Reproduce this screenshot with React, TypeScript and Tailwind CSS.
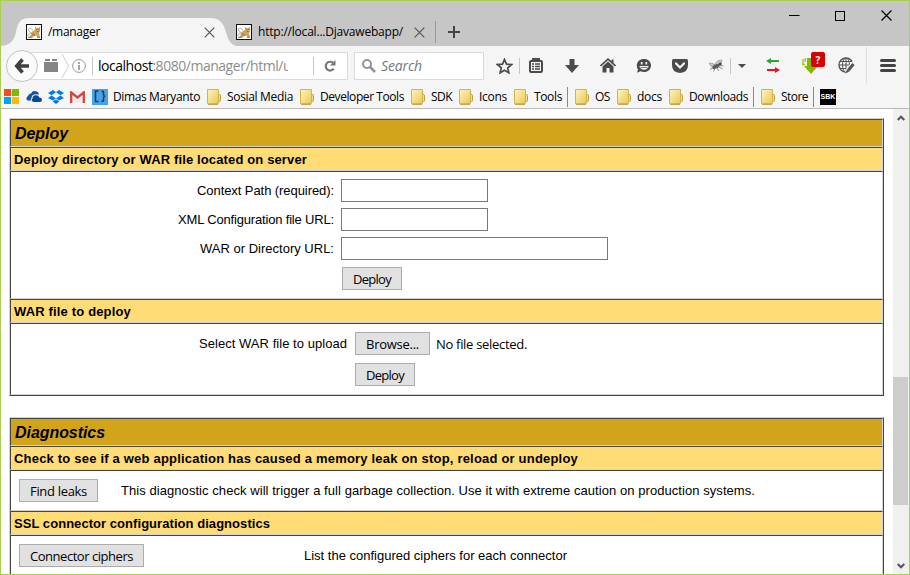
import { useLayoutEffect, useRef, useState, type ReactNode } from "react";

const UI = "font-['Open_Sans','Noto_Sans',sans-serif]";
const ARIAL = "font-['Liberation_Sans',Arial,sans-serif]";

/** Single-line text in a box of `w` pixels, tracked so that its glyphs fill the box. */
function Fit({ w, className = "", children }: { w: number; className?: string; children: ReactNode }) {
  const ref = useRef<HTMLSpanElement>(null);
  const [spacing, setSpacing] = useState(0);
  useLayoutEffect(() => {
    const el = ref.current;
    if (!el) return;
    const n = (el.textContent || "").length;
    setSpacing((w - 1 - el.getBoundingClientRect().width) / n);
  }, [w]);
  return (
    <span className={`inline-block shrink-0 whitespace-nowrap text-left ${className}`} style={{ width: w }}>
      <span ref={ref} style={{ letterSpacing: spacing }}>{children}</span>
    </span>
  );
}

function Tomcat() {
  return (
    <svg width="16" height="16" viewBox="0 0 16 16" className="shrink-0">
      <rect x=".5" y=".5" width="15" height="15" fill="#fff" stroke="#111" />
      <path d="M9 2.500l1.500 1.500h2L14 2.500V7l-1 2 1 4h-2.500L10 11.500 6.500 13H3l1.500-1.500L5 8.500 7 7l2-1z" fill="#cfa458" />
      <path d="M1.800 12c0-2 2-1.500 2.500-3S2.500 6.800 2.500 5.500 4 4 5 4.500s1 1.500 2 1.500" fill="none" stroke="#a9a9a9" />
      <path d="M2 13.300h4.500M11 13.300h3M6 10l3 1.500M10.300 5.500h.9M12.400 5.500h.9M11 7.500h1.500" stroke="#6f5a35" fill="none" strokeWidth=".8" />
    </svg>
  );
}

function Cross() {
  return (
    <svg width="11" height="11" viewBox="0 0 11 11" className="shrink-0">
      <path d="M.7.700l9.600 9.600M10.300.700L.7 10.300" stroke="#555" strokeWidth="1.200" />
    </svg>
  );
}

function Folder({ className = "" }: { className?: string }) {
  return (
    <svg width="14" height="16" viewBox="0 0 14 16" className={`shrink-0 ${className}`}>
      <defs>
        <linearGradient id="fold" x1="0" y1="0" x2="1" y2="1">
          <stop offset="0" stopColor="#fff6b8" />
          <stop offset="1" stopColor="#e6c75c" />
        </linearGradient>
      </defs>
      <path d="M9 5.500h3.500q1 0 1 1v5q0 1-1 1H11v2H9z" fill="#f1dc86" stroke="#c29f37" />
      <path d="M.5.500h11v13l-1 1.500H1.500q-1 0-1-1z" fill="url(#fold)" stroke="#d2b34d" />
      <path d="M1 15.200h10" stroke="#b8922c" />
    </svg>
  );
}

function TabStrip() {
  return (
    <div className="flex h-[45px] shrink-0 bg-[#c6c6c6]">
      <div className="relative mt-[17px] flex h-[28px] w-[235px] shrink-0">
        <svg width="236" height="28" viewBox="0 0 236 28" className="absolute left-0 top-0">
          <path d="M0 28C10 27 13 22 15 14C17 5 19 0 28 0H209C218 0 222 4 225 14C227 22 230 27 236 28Z" fill="#f5f5f5" />
        </svg>
        <div className="relative flex h-7 items-center pl-[25px]">
          <Tomcat />
          <Fit w={53} className="ml-[6px] text-[12px] leading-[16px]">/manager</Fit>
          <div className="ml-[103px]"><Cross /></div>
        </div>
      </div>
      <div className="mt-[17px] flex h-7 items-center">
        <Tomcat />
        <Fit w={146} className="ml-[6px] text-[12px] leading-[16px]">http://local...Djavawebapp/</Fit>
        <div className="ml-[10px]"><Cross /></div>
        <div className="ml-[10px] h-[22px] w-px bg-[#999]" />
        <svg width="12" height="12" viewBox="0 0 12 12" className="ml-3">
          <path d="M6 0v12M0 6h12" stroke="#444" strokeWidth="2" />
        </svg>
      </div>
      <div className="ml-auto flex h-[29px] items-center pr-[17px]">
        <svg width="11" height="11" viewBox="0 0 11 11"><path d="M0 5.500h10.500" stroke="#000" /></svg>
        <svg width="10" height="10" viewBox="0 0 10 10" className="ml-[35px]"><rect x=".5" y=".5" width="9" height="9" fill="none" stroke="#000" /></svg>
        <svg width="11" height="11" viewBox="0 0 11 11" className="ml-[36px]"><path d="M.5.500l10 10M10.500.500l-10 10" stroke="#000" strokeWidth="1.200" /></svg>
      </div>
    </div>
  );
}

function Sep({ className = "" }: { className?: string }) {
  return <div className={`w-px shrink-0 bg-[#c5c5c5] ${className}`} />;
}

function Toolbar() {
  return (
    <div className="flex h-[39px] shrink-0 items-center bg-[#f5f5f5]">
      <div className="relative z-10 ml-[5px] flex size-8 shrink-0 items-center justify-center rounded-full border border-[#c3c3c3] bg-[#fafafa]">
        <svg width="16" height="16" viewBox="0 0 16 16">
          <path d="M8.500 1.500L2.800 8l5.700 6.500M3.500 8H15" stroke="#404040" strokeWidth="3.600" fill="none" />
        </svg>
      </div>
      <div className="-ml-2 flex h-7 w-[318px] shrink-0 items-center border border-[#dadada] bg-white pl-[13px]">
        <svg width="14" height="13" viewBox="0 0 14 13" className="shrink-0">
          <path d="M0 3h14v10H0zM1 0h5v2H1zM8 0h5v2H8z" fill="#858585" />
        </svg>
        <svg width="9" height="26" viewBox="0 0 9 26" className="ml-[3px] shrink-0">
          <path d="M1 1l6.500 12L1 25" stroke="#cfcfcf" fill="none" />
        </svg>
        <svg width="14" height="14" viewBox="0 0 14 14" className="ml-[2px] shrink-0">
          <circle cx="7" cy="7" r="6.400" stroke="#999" fill="none" />
          <path d="M7 6v5M7 3v2" stroke="#888" strokeWidth="1.500" />
        </svg>
        <Sep className="ml-[6px] h-[18px]" />
        <div className="ml-[5px] w-[190px] shrink-0 overflow-hidden whitespace-nowrap text-[14px] leading-5 text-[#8c8c8c]">
          <Fit w={194}><span className="text-black">localhost</span>:8080/manager/html/u</Fit>
        </div>
        <Sep className="ml-[25px] h-[18px]" />
        <svg width="12" height="12" viewBox="0 0 12 12" className="ml-[10px] shrink-0">
          <path d="M9.700 8.700A4.400 4.400 0 1 1 9 2.800" stroke="#777" strokeWidth="2.200" fill="none" />
          <path d="M11.500 0v5.500H6z" fill="#777" />
        </svg>
      </div>
      <div className="ml-[6px] flex h-7 w-[130px] shrink-0 items-center border border-[#dadada] bg-white pl-[7px]">
        <svg width="14" height="14" viewBox="0 0 14 14">
          <circle cx="5" cy="5" r="4" stroke="#949494" strokeWidth="2" fill="none" />
          <path d="M8 8l5 5" stroke="#949494" strokeWidth="2.600" />
        </svg>
        <Fit w={42} className="ml-[5px] text-[14px] italic leading-5 text-[#777]">Search</Fit>
      </div>
      <svg width="17" height="16" viewBox="0 0 17 16" className="ml-[12px] shrink-0">
        <path d="M8.500 1.500l2 4.700 5 .4-3.800 3.300 1.200 4.900-4.400-2.600-4.400 2.600 1.200-4.900L1.500 6.600l5-.4z" fill="none" stroke="#4b4b4b" strokeWidth="1.700" />
      </svg>
      <Sep className="ml-[6px] h-4" />
      <svg width="14" height="15" viewBox="0 0 14 15" className="ml-[9px] shrink-0">
        <path d="M4 2.500V1h6v1.500" stroke="#4b4b4b" strokeWidth="2" fill="none" />
        <rect x="1" y="3" width="12" height="11" rx="1" fill="none" stroke="#4b4b4b" strokeWidth="2" />
        <path d="M3 6h2M6 6h5M3 8.500h2M6 8.500h5M3 11h2M6 11h5" stroke="#4b4b4b" strokeWidth="1.300" />
      </svg>
      <svg width="14" height="14" viewBox="0 0 14 14" className="ml-[22px] shrink-0">
        <path d="M4.500 0h5v6H14l-7 8-7-8h4.500z" fill="#4b4b4b" />
      </svg>
      <svg width="16" height="15" viewBox="0 0 16 15" className="ml-[21px] shrink-0">
        <path d="M.5 8L8 1.200 15.500 8" fill="none" stroke="#4b4b4b" strokeWidth="1.600" />
        <path d="M11.500 1.500h2v4l-2-2zM2.500 8.500L8 3.600l5.500 4.900V14.500h-4V10h-3v4.500h-4z" fill="#4b4b4b" />
      </svg>
      <svg width="15" height="14" viewBox="0 0 15 14" className="ml-[20px] shrink-0">
        <path d="M8 0C12 0 15 2.700 15 6.500S12 13 8 13Q6 13 4.500 12.200L1 13.700 2 10.500Q.8 9 .8 6.500C.8 2.700 4 0 8 0z" fill="#4b4b4b" />
        <path d="M5.700 3v2.500M10.300 3v2.500" stroke="#f5f5f5" strokeWidth="1.700" />
        <path d="M3.300 7h9.400q-1 3.800-4.700 3.800T3.300 7z" fill="#f5f5f5" />
        <path d="M4.500 8.500h7" stroke="#4b4b4b" strokeWidth=".7" />
      </svg>
      <svg width="16" height="14" viewBox="0 0 16 14" className="ml-[21px] shrink-0">
        <path d="M1.500 0h13Q16 0 16 1.500V6Q16 13.500 8 14 0 13.500 0 6V1.500Q0 0 1.500 0z" fill="#4b4b4b" />
        <path d="M4 4.500L8 8.500 12 4.500" stroke="#f5f5f5" strokeWidth="2.200" fill="none" strokeLinecap="round" />
      </svg>
      <svg width="16" height="14" viewBox="0 0 16 14" className="ml-[20px] shrink-0">
        <path d="M6 6l4-4.500 4-.5-1 3.500-5 3zM1 4l4 .5 3 2-5 1z" stroke="#999" strokeWidth=".7" fill="#c4c4c4" />
        <ellipse cx="8" cy="7.500" rx="4" ry="2" fill="#5c5c5c" transform="rotate(-25 8 7.500)" />
        <path d="M5 8.500L2 10.500M7 9.500l-1.500 3M9.500 9l1 3M11 8l3.500 2M11.500 6.500l4 .5" stroke="#777" strokeWidth=".8" />
        <circle cx="12.300" cy="5" r="1.400" fill="#444" />
      </svg>
      <Sep className="ml-[6px] h-4" />
      <svg width="8" height="4" viewBox="0 0 8 4" className="ml-[7px] shrink-0"><path d="M0 0h8L4 4z" fill="#4b4b4b" /></svg>
      <svg width="14" height="15" viewBox="0 0 14 15" className="ml-5 shrink-0">
        <path d="M0 3l5-3v2h8v2H5v2z" fill="#2fa62b" />
        <path d="M14 12L9 9v2H1v2h8v2z" fill="#e8112d" />
      </svg>
      <div className="relative ml-[22px] h-[15px] w-4 shrink-0">
        <svg width="16" height="16" viewBox="0 0 16 16" className="block">
          <path d="M5 0h7v8h4l-7 8-7-8h3z" fill="#85b800" />
          <path d="M1 1v5M3.300 0v4M0 6.500h3" stroke="#9acb19" strokeWidth="1.400" />
        </svg>
        <div className="absolute left-[9px] top-[-6px] flex h-[15px] w-[14px] items-center justify-center rounded-[2px] bg-[#d90000] text-[10px] font-bold leading-none text-white">?</div>
      </div>
      <svg width="17" height="17" viewBox="0 0 17 17" className="ml-[20px] shrink-0">
        <circle cx="8" cy="8" r="7" fill="none" stroke="#555" strokeWidth="1.400" />
        <ellipse cx="8" cy="8" rx="3.500" ry="7" fill="none" stroke="#555" />
        <path d="M8 1v14M1 8h14M2 4.500h12M2 11.500h12" stroke="#555" />
        <path d="M16.500 6l-8 9.500" stroke="#f5f5f5" strokeWidth="5.500" />
        <path d="M15.500 7l-5 6" stroke="#555" strokeWidth="3" />
        <path d="M9 12l-1.500 4.500L12 14z" fill="#555" />
      </svg>
      <div className="ml-[11px] h-[37px] w-px shrink-0 bg-[#dedede]" />
      <svg width="16" height="13" viewBox="0 0 16 13" className="ml-[13px] shrink-0">
        <path d="M1.500 1.500h13M1.500 6.500h13M1.500 11.500h13" stroke="#444" strokeWidth="3" strokeLinecap="round" />
      </svg>
    </div>
  );
}

function Mark({ w, gap, children }: { w: number; gap: string; children: string }) {
  return (
    <>
      <Folder className={gap} />
      <Fit w={w} className="ml-[6px]">{children}</Fit>
    </>
  );
}

function Bookmarks() {
  return (
    <div className="flex h-[24px] shrink-0 items-center border-b border-[#b9b9b9] bg-[#f5f5f5] pl-[3px] text-[12px] leading-4">
      <svg width="15" height="15" viewBox="0 0 15 15" className="shrink-0">
        <path d="M0 0h7v7H0z" fill="#f25022" /><path d="M8 0h7v7H8z" fill="#7fba00" />
        <path d="M0 8h7v7H0z" fill="#00a4ef" /><path d="M8 8h7v7H8z" fill="#ffb900" />
      </svg>
      <svg width="16" height="11" viewBox="0 0 16 11" className="ml-[7px] shrink-0">
        <path d="M1.500 9.500Q-1 7 2 5 2.500 2.500 5 2.500 6.500-.3 9.500 .2 12.500.500 13 3.500L9 3.200Q5.500 4 5.500 7 4.500 8 5 9.500z" fill="#1551a8" />
        <path d="M7.500 11Q4.500 9.500 6.500 7.500 6.500 4.500 9.500 4.300 12.500 4 13.300 6.500 16 6.500 16 9 15.500 11 14 11z" fill="#08499c" />
      </svg>
      <svg width="16" height="14" viewBox="0 0 16 14" className="ml-[6px] shrink-0">
        <path d="M5 0l3 2.300-4.500 3L0 3zM11 0L8 2.300l4.500 3L16 3zM3.500 5.500L8 8.300 5 10.500 0 8zM12.500 5.500L8 8.300l3 2.200L16 8zM4.500 11.500l3.500-2 3.500 2L8 14z" fill="#007ee5" />
      </svg>
      <svg width="15" height="12" viewBox="0 0 15 12" className="ml-[6px] shrink-0">
        <path d="M1 0h13v12H1z" fill="#eee" />
        <path d="M1.200 12V1.500l6.300 5 6.300-5V12" fill="none" stroke="#d6453d" strokeWidth="2.300" />
      </svg>
      <div className="ml-[7px] flex size-4 shrink-0 items-center justify-center bg-[#47a2e8]">
        <svg width="12" height="13" viewBox="0 0 12 13">
          <path d="M4.500 1H1.500v10.500h3M7.500 1q2 0 2 1.500v2q0 1.500 1.500 1.700-1.500.300-1.500 1.800v2q0 1.500-2 1.500" fill="none" stroke="#173c5c" strokeWidth="1.500" />
        </svg>
      </div>
      <Fit w={88} className="ml-[5px]">Dimas Maryanto</Fit>
      <Mark w={67} gap="ml-[6px]">Sosial Media</Mark>
      <Mark w={85} gap="ml-[6px]">Developer Tools</Mark>
      <Mark w={22} gap="ml-[6px]">SDK</Mark>
      <Mark w={29} gap="ml-[6px]">Icons</Mark>
      <Mark w={29} gap="ml-[6px]">Tools</Mark>
      <div className="ml-[4px] h-5 w-px shrink-0 bg-[#8a8a8a]" />
      <Mark w={16} gap="ml-[7px]">OS</Mark>
      <Mark w={26} gap="ml-[6px]">docs</Mark>
      <Mark w={60} gap="ml-[6px]">Downloads</Mark>
      <div className="ml-[4px] h-5 w-px shrink-0 bg-[#8a8a8a]" />
      <Mark w={28} gap="ml-[7px]">Store</Mark>
      <div className="ml-[4px] h-5 w-px shrink-0 bg-[#8a8a8a]" />
      <div className={`ml-[6px] flex size-4 shrink-0 items-center justify-center bg-black text-[7px] font-bold leading-none text-white ${ARIAL}`}>SBK</div>
    </div>
  );
}

const CELL = "shrink-0 border border-t-[#454545] border-l-[#454545] border-r-[#d3d3d3] border-b-[#d3d3d3]";
const TABLE = "flex w-[875px] shrink-0 flex-col border border-t-[#d3d3d3] border-l-[#d3d3d3] border-r-[#454545] border-b-[#454545]";

function Title({ w, children }: { w: number; children: string }) {
  return (
    <div className={`${CELL} flex h-7 items-center bg-[#d2a41c] pl-[4px] pt-[2px] text-[16px] font-bold italic leading-[18px]`}>
      <Fit w={w}>{children}</Fit>
    </div>
  );
}

function Sub({ w, children }: { w: number; children: string }) {
  return (
    <div className={`${CELL} flex h-6 items-center bg-[#ffdc75] pl-[3px] pt-[2px] text-[13px] font-bold leading-4`}>
      <Fit w={w}>{children}</Fit>
    </div>
  );
}

function Button({ w, size, children }: { w: number; size: string; children: string }) {
  return (
    <button className={`flex h-[23px] shrink-0 items-center justify-center border border-[#adadad] bg-[#e1e1e1] pl-px pt-px text-[13px] leading-4 ${UI} ${size}`}>
      <Fit w={w}>{children}</Fit>
    </button>
  );
}

function Field({ label, w, size }: { label: string; w: number; size: string }) {
  return (
    <label className="flex h-[23px] items-center gap-[6px]">
      <span className="flex w-[324px] justify-end"><Fit w={w}>{label}</Fit></span>
      <input className={`h-[23px] border border-[#7a7a7a] bg-white ${size}`} />
    </label>
  );
}

function Page() {
  return (
    <div className={`flex min-w-0 flex-1 flex-col gap-[21px] overflow-hidden bg-white pl-2 pt-[9px] text-[13px] leading-4 text-black ${ARIAL}`}>
      <div className={TABLE}>
        <Title w={54}>Deploy</Title>
        <Sub w={294}>Deploy directory or WAR file located on server</Sub>
        <div className={`${CELL} flex h-[128px] flex-col gap-[6px] pt-[7px]`}>
          <Field label="Context Path (required):" w={138} size="w-[147px]" />
          <Field label="XML Configuration file URL:" w={157} size="w-[147px]" />
          <Field label="WAR or Directory URL:" w={135} size="w-[267px]" />
          <div className="flex pl-[331px] pt-px"><Button w={39} size="w-[60px]">Deploy</Button></div>
        </div>
        <Sub w={118}>WAR file to deploy</Sub>
        <div className={`${CELL} flex h-[72px] flex-col gap-2 pt-2`}>
          <div className="flex items-center">
            <span className="mr-[7px] flex w-[337px] justify-end"><Fit w={149}>Select WAR file to upload</Fit></span>
            <Button w={54} size="w-[75px]">Browse...</Button>
            <Fit w={92} className={`ml-[6px] pt-px text-[13px] leading-4 ${UI}`}>No file selected.</Fit>
          </div>
          <div className="flex pl-[344px]"><Button w={39} size="w-[60px]">Deploy</Button></div>
        </div>
      </div>
      <div className={TABLE}>
        <Title w={91}>Diagnostics</Title>
        <Sub w={565}>Check to see if a web application has caused a memory leak on stop, reload or undeploy</Sub>
        <div className={`${CELL} flex h-[41px] pl-2 pt-2`}>
          <div className="flex h-[23px] items-center gap-[23px]">
            <Button w={58} size="w-[79px]">Find leaks</Button>
            <Fit w={635}>This diagnostic check will trigger a full garbage collection. Use it with extreme caution on production systems.</Fit>
          </div>
        </div>
        <Sub w={257}>SSL connector configuration diagnostics</Sub>
        <div className={`${CELL} flex h-[41px] pl-2 pt-2`}>
          <div className="flex h-[23px] items-center gap-[160px]">
            <Button w={104} size="w-[125px]">Connector ciphers</Button>
            <Fit w={264}>List the configured ciphers for each connector</Fit>
          </div>
        </div>
      </div>
    </div>
  );
}

function Scrollbar() {
  return (
    <div className="flex w-4 shrink-0 flex-col items-center bg-[#f0f0f0]">
      <svg width="8" height="6" viewBox="0 0 8 6" className="mt-[6px] shrink-0">
        <path d="M.7 5L4 1.700 7.300 5" stroke="#555" strokeWidth="2" fill="none" />
      </svg>
      <div className="mt-[256px] h-[128px] w-[15px] shrink-0 self-start bg-[#cdcdcd]" />
      <svg width="8" height="6" viewBox="0 0 8 6" className="mt-auto mb-[5px] shrink-0">
        <path d="M.7 1L4 4.300 7.300 1" stroke="#555" strokeWidth="2" fill="none" />
      </svg>
    </div>
  );
}

export default function App() {
  return (
    <div className={`flex h-[575px] w-[910px] flex-col overflow-hidden border border-[#a9cf4c] text-black ${UI}`}>
      <TabStrip />
      <Toolbar />
      <Bookmarks />
      <div className="flex min-h-0 flex-1">
        <Page />
        <Scrollbar />
      </div>
    </div>
  );
}
